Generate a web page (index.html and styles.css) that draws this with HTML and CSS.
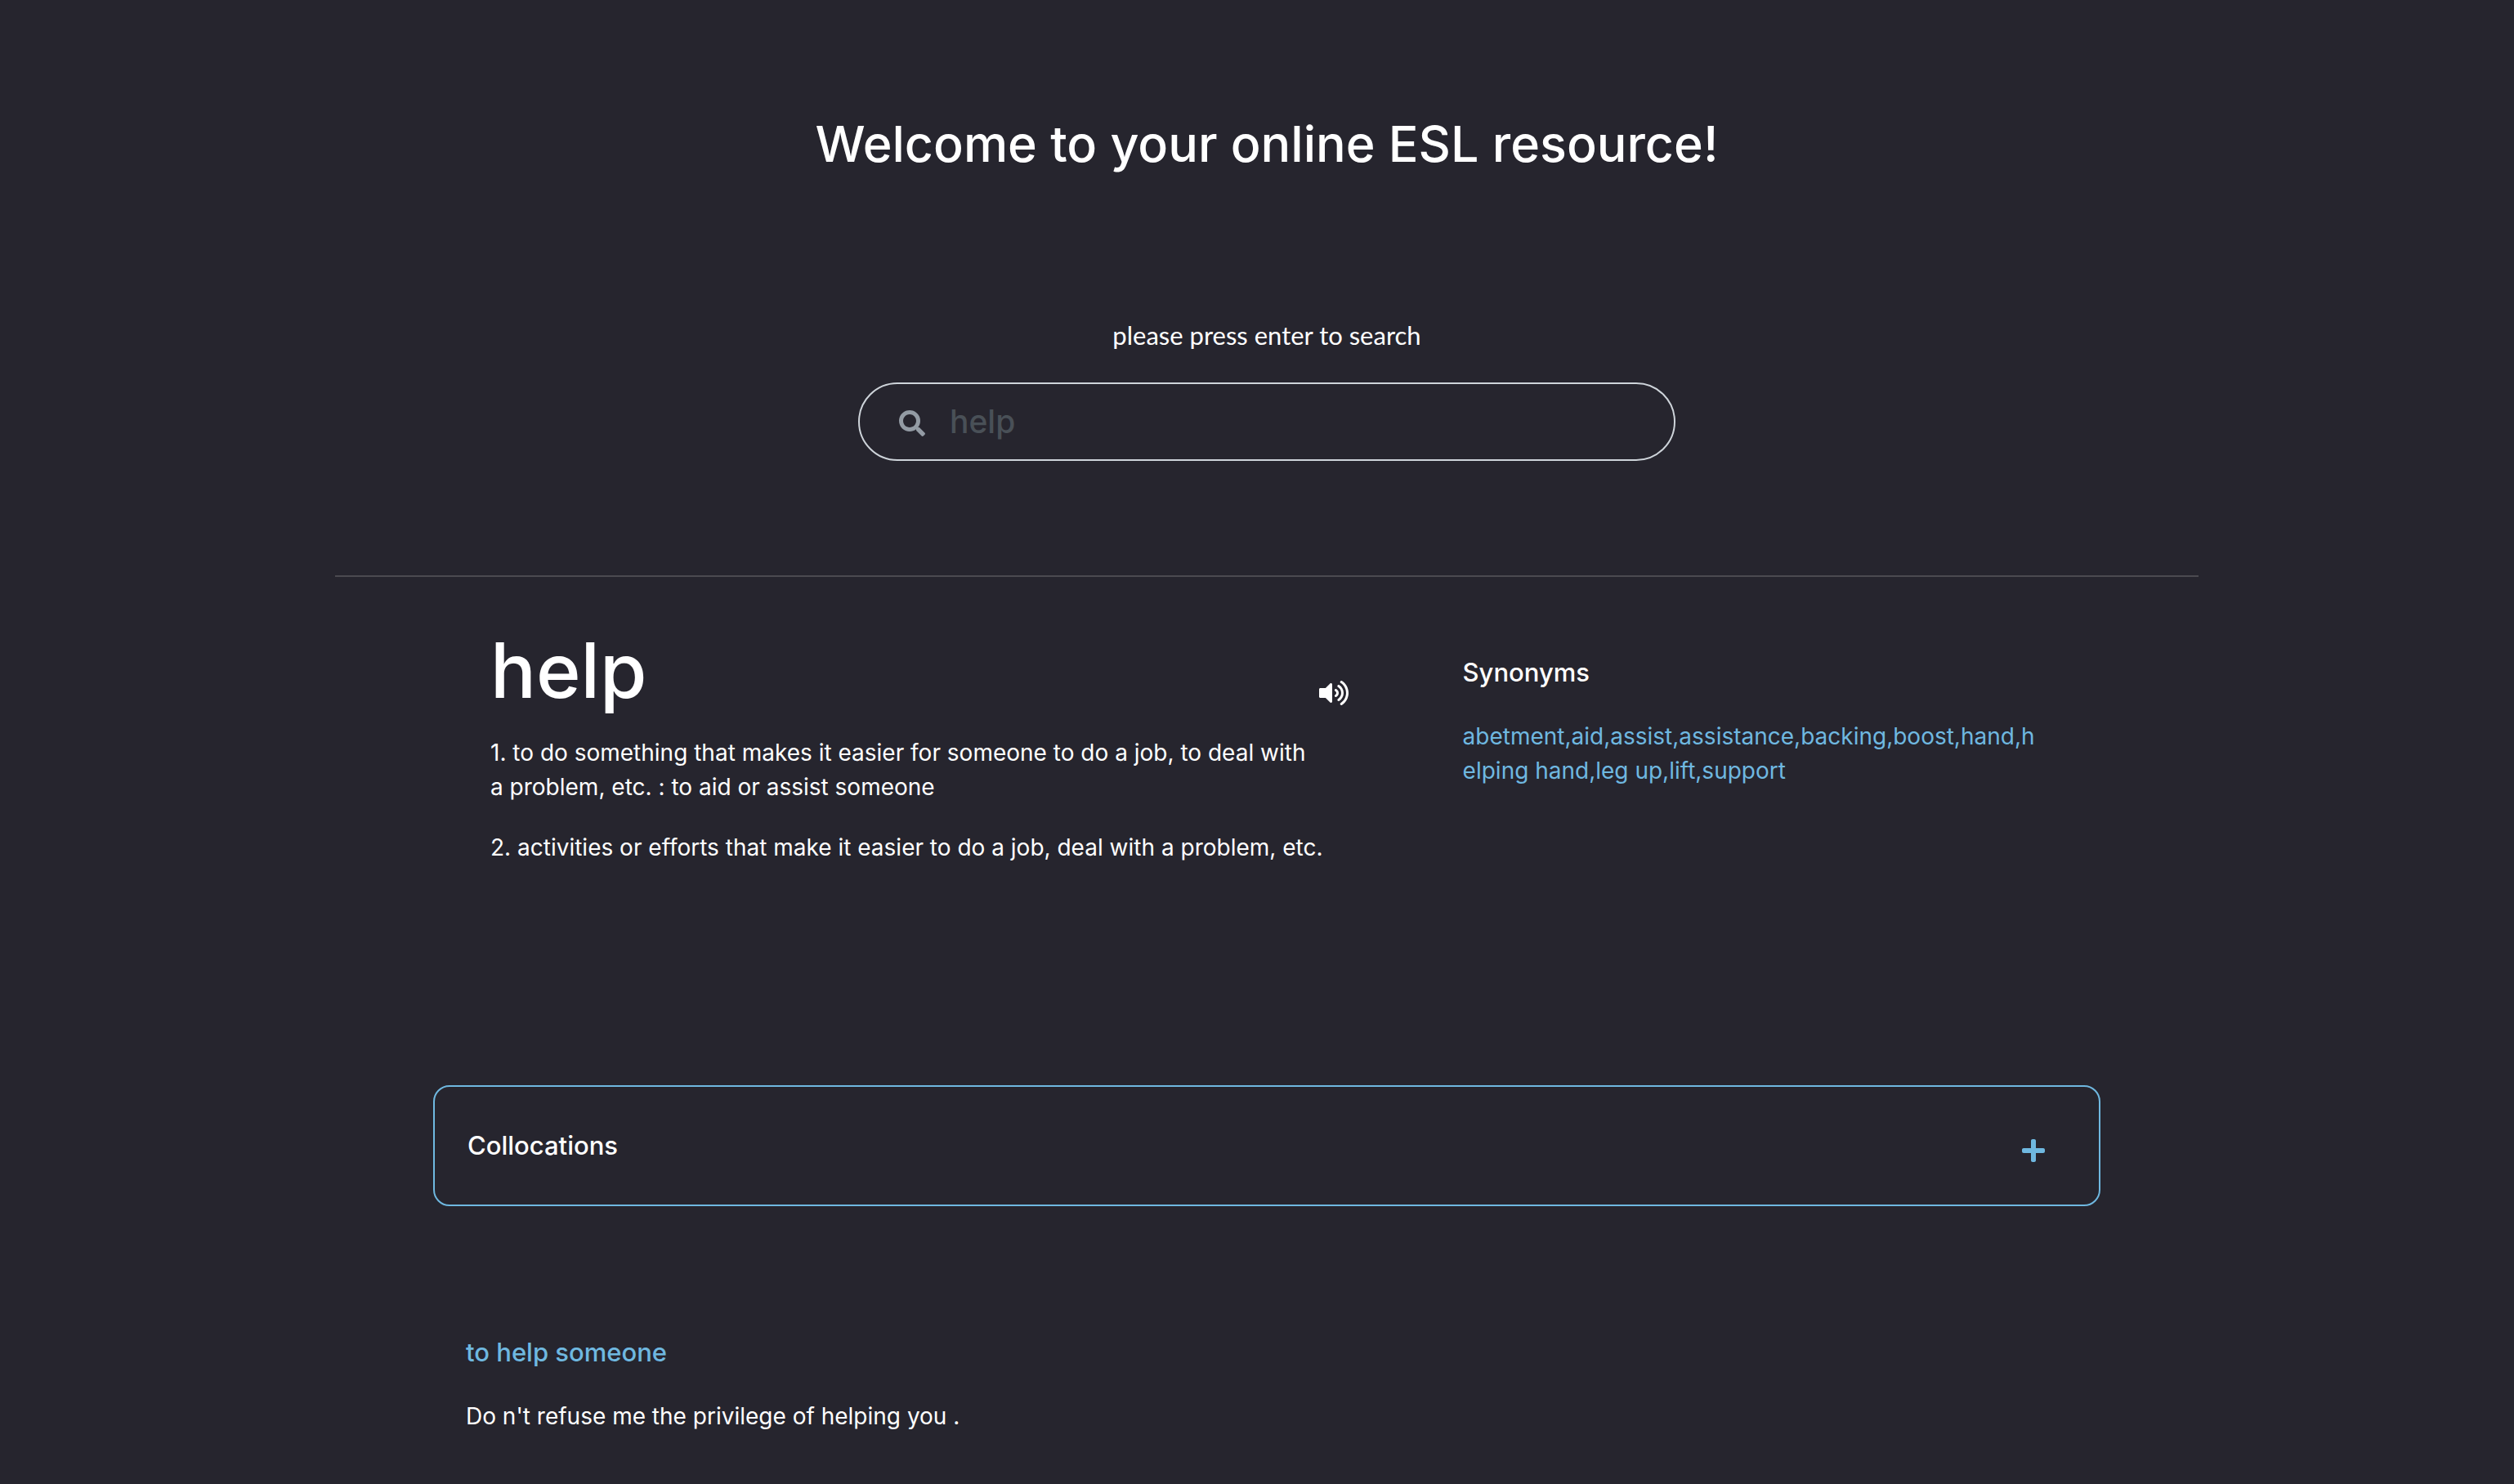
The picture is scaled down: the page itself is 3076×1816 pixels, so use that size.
FILE: index.html
```
<!DOCTYPE html>
<html lang="en">
<head>
<meta charset="utf-8">
<meta name="viewport" content="width=device-width, initial-scale=1">
<title>ESL resource</title>
<link rel="stylesheet" href="styles.css">
</head>
<body>
<main class="page">
  <header class="intro">
    <h1 class="title">Welcome to your online ESL resource!</h1>
    <form class="search">
      <label class="search-label" for="word">please press enter to search</label>
      <div class="search-box">
        <svg class="search-icon" viewBox="0 0 512 512" aria-hidden="true"><path d="M505 442.7L405.3 343c-4.5-4.5-10.6-7-17-7H372c27.6-35.3 44-79.7 44-128C416 93.1 322.9 0 208 0S0 93.1 0 208s93.1 208 208 208c48.3 0 92.7-16.4 128-44v16.3c0 6.4 2.5 12.5 7 17l99.7 99.7c9.4 9.4 24.6 9.4 33.9 0l28.3-28.3c9.4-9.4 9.4-24.6.1-34zM208 336c-70.7 0-128-57.2-128-128 0-70.7 57.2-128 128-128 70.7 0 128 57.2 128 128 0 70.7-57.2 128-128 128z"/></svg>
        <input class="search-input" id="word" type="text" value="help">
      </div>
    </form>
  </header>

  <section class="entry">
    <div class="definition">
      <div class="word-row">
        <h2 class="word">help</h2>
        <button class="icon-button speak" type="button" aria-label="Play pronunciation">
          <svg class="speak-icon" viewBox="0 0 576 512" aria-hidden="true"><path d="M215.03 71.05L126.06 160H24c-13.26 0-24 10.74-24 24v144c0 13.25 10.74 24 24 24h102.06l88.97 88.95c15.03 15.03 40.97 4.47 40.97-16.97V88.02c0-21.46-25.96-31.98-40.97-16.97zM448.35 19.97c-11.17-7.33-26.18-4.24-33.51 6.95-7.34 11.17-4.22 26.18 6.95 33.51 66.27 43.49 105.82 116.6 105.82 195.58 0 78.98-39.55 152.09-105.82 195.58-11.17 7.32-14.29 22.34-6.95 33.5 7.04 10.71 21.93 14.56 33.51 6.95C528.27 439.58 576 351.33 576 256S528.27 72.43 448.35 19.97zM480 256c0-63.53-32.06-121.94-85.77-156.24-11.19-7.14-26.03-3.82-33.12 7.46s-3.78 26.21 7.41 33.36C408.27 165.97 432 209.11 432 256s-23.73 90.02-63.48 115.42c-11.19 7.14-14.5 22.07-7.41 33.36 6.51 10.36 21.12 15.14 33.12 7.46C447.94 377.94 480 319.54 480 256zm-141.77-76.87c-11.58-6.33-26.19-2.16-32.61 9.45-6.39 11.61-2.16 26.2 9.45 32.61C327.98 228.28 336 241.63 336 256c0 14.38-8.02 27.72-20.92 34.81-11.61 6.41-15.84 21-9.45 32.61 6.43 11.66 21.05 15.8 32.61 9.45 28.23-15.55 45.77-45 45.77-76.88s-17.54-61.32-45.78-76.86z"/></svg>
        </button>
      </div>
      <div class="meanings">
        <p class="meaning">1. to do something that makes it easier for someone to do a job, to deal with a&nbsp;problem, etc. : to aid or assist someone</p>
        <p class="meaning">2. activities or efforts that make it easier to do a job, deal with a problem, etc.</p>
      </div>
    </div>
    <aside class="synonyms">
      <h3 class="subheading">Synonyms</h3>
      <p class="synonym-list">abetment,aid,assist,assistance,backing,boost,hand,helping hand,leg up,lift,support</p>
    </aside>
  </section>

  <section class="collocations">
    <div class="panel">
      <h3 class="subheading">Collocations</h3>
      <button class="icon-button expand" type="button" aria-label="Expand collocations">
        <svg class="expand-icon" viewBox="0 0 448 512" aria-hidden="true"><path d="M416 208H272V64c0-17.67-14.33-32-32-32h-32c-17.67 0-32 14.33-32 32v144H32c-17.67 0-32 14.33-32 32v32c0 17.67 14.33 32 32 32h144v144c0 17.67 14.33 32 32 32h32c17.67 0 32-14.33 32-32V304h144c17.67 0 32-14.33 32-32v-32c0-17.67-14.33-32-32-32z"/></svg>
      </button>
    </div>
    <article class="example">
      <h3 class="subheading phrase">to help someone</h3>
      <p class="sentence">Do n't refuse me the privilege of helping you .</p>
    </article>
  </section>
</main>
</body>
</html>
```

FILE: styles.css
```
:root {
  --background: #26252e;
  --accent: #6fb8e0;
  --rule: #4b4a50;
  --muted: #495057;
  --icon: #939ba4;
  --field: #ced4da;
}

* {
  box-sizing: border-box;
}

body {
  margin: 0;
  background: var(--background);
  color: #fff;
  font-family: Inter, Roboto, "Liberation Sans", sans-serif;
  font-size: 28px;
  line-height: 42px;
}

h1, h2, h3, p {
  margin: 0;
  font-weight: 400;
}

.page {
  padding: 136px 0 60px 24px;
}

.intro {
  max-width: 2280px;
  margin: 0 auto;
  padding-bottom: 140px;
  border-bottom: 2px solid var(--rule);
  text-align: center;
}

.title {
  font-size: 61px;
  font-weight: 500;
  line-height: 80px;
}

.search {
  max-width: 1000px;
  margin: 170px auto 0;
}

.search-label {
  display: block;
  margin-bottom: 34px;
  font-family: Lato, "Open Sans", sans-serif;
  font-size: 31px;
  line-height: 48px;
}

.search-box {
  display: flex;
  align-items: center;
  gap: 30px;
  height: 96px;
  padding: 0 48px;
  border: 2px solid var(--field);
  border-radius: 48px;
}

.search-icon {
  flex: none;
  width: 32px;
  height: 32px;
  margin-top: 4px;
  fill: var(--icon);
}

.search-input {
  flex: 1;
  min-width: 0;
  padding: 0;
  border: 0;
  outline: 0;
  background: transparent;
  color: var(--muted);
  font: inherit;
  font-size: 39px;
  font-weight: 500;
  line-height: 60px;
}

.entry {
  display: grid;
  grid-template-columns: 3fr 2fr;
  gap: 124px;
  max-width: 2040px;
  margin: 54px auto 0;
  padding: 0 70px;
}

.word-row {
  display: flex;
  align-items: flex-end;
  justify-content: space-between;
  padding-right: 16px;
}

.word {
  font-size: 93px;
  font-weight: 500;
  line-height: 120px;
}

.icon-button {
  display: flex;
  padding: 0;
  border: 0;
  background: none;
  cursor: pointer;
}

.speak {
  padding-bottom: 16px;
}

.speak-icon {
  width: 36px;
  height: 32px;
  fill: #fff;
}

.meanings {
  display: grid;
  gap: 32px;
  padding: 20px 40px 0 0;
}

.synonyms {
  padding-top: 38px;
}

.subheading {
  font-size: 31px;
  font-weight: 500;
  line-height: 50px;
}

.synonym-list {
  margin-top: 32px;
  color: var(--accent);
  word-break: break-all;
}

.collocations {
  max-width: 2040px;
  margin: 270px auto 0;
}

.panel {
  display: flex;
  align-items: center;
  justify-content: space-between;
  height: 148px;
  padding: 0 66px 0 40px;
  border: 2px solid var(--accent);
  border-radius: 20px;
}

.expand {
  padding-top: 12px;
}

.expand-icon {
  width: 28px;
  height: 32px;
  fill: var(--accent);
}

.example {
  padding: 154px 40px 0;
}

.phrase {
  color: var(--accent);
}

.sentence {
  margin-top: 32px;
}
```
